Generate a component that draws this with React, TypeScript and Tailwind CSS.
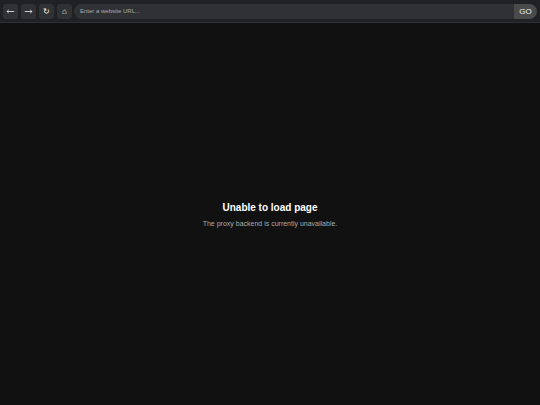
import { useState, type ReactNode } from "react";

function Arrow({ d }: { d: string }) {
  return (
    <svg className="h-[15px] w-[15px]" viewBox="0 0 15 15" fill="none" stroke="#f0f0f0" aria-hidden="true">
      <path d="M3.8 7.5h7.4" strokeWidth="0.8" />
      <path d={d} strokeWidth="0.7" />
    </svg>
  );
}

const NAV_BUTTONS: { label: string; icon: ReactNode }[] = [
  { label: "Back", icon: <Arrow d="M5.8 5.9 4 7.5l1.8 1.6" /> },
  { label: "Forward", icon: <Arrow d="M9.2 5.9 11 7.5 9.2 9.1" /> },
  { label: "Reload", icon: "↻" },
  { label: "Home", icon: "⌂" },
];

function Toolbar() {
  const [url, setUrl] = useState("");

  return (
    <form
      className="flex shrink-0 items-center gap-[2px] border-b border-[#2c3034] bg-[#202124] px-[3px] pt-[4px] pb-[3px]"
      onSubmit={(e) => e.preventDefault()}
    >
      <div className="flex gap-[3px]">
        {NAV_BUTTONS.map((b) => (
          <button
            key={b.label}
            type="button"
            aria-label={b.label}
            className="flex h-[15px] w-[15px] items-center justify-center rounded-[3px] bg-[#303134] text-[8px] leading-none text-[#f0f0f0]"
          >
            {b.icon}
          </button>
        ))}
      </div>
      <div className="flex h-[15px] min-w-0 flex-1 overflow-hidden rounded-full bg-[#303134]">
        <input
          type="text"
          aria-label="Website URL"
          placeholder="Enter a website URL..."
          value={url}
          onChange={(e) => setUrl(e.target.value)}
          className="min-w-0 flex-1 bg-transparent px-[6px] text-[6px] text-white outline-none placeholder:text-[#aaaaaa]"
        />
        <button type="submit" className="w-[23px] bg-[#4a4a4a] text-[8px] leading-none text-[#f0f0f0]">
          GO
        </button>
      </div>
    </form>
  );
}

export default function App() {
  return (
    <div className="flex min-h-screen flex-col bg-[#111111] font-['Liberation_Sans',Arial,sans-serif]">
      <Toolbar />
      <main className="flex flex-1 flex-col items-center justify-center gap-[6px] pt-[2px] text-center">
        <h1 className="text-[10px] leading-[12px] font-bold text-white">Unable to load page</h1>
        <p className="text-[7px] leading-[8px] text-[#aaaaaa]">
          The proxy backend is currently unavailable.
        </p>
      </main>
    </div>
  );
}
